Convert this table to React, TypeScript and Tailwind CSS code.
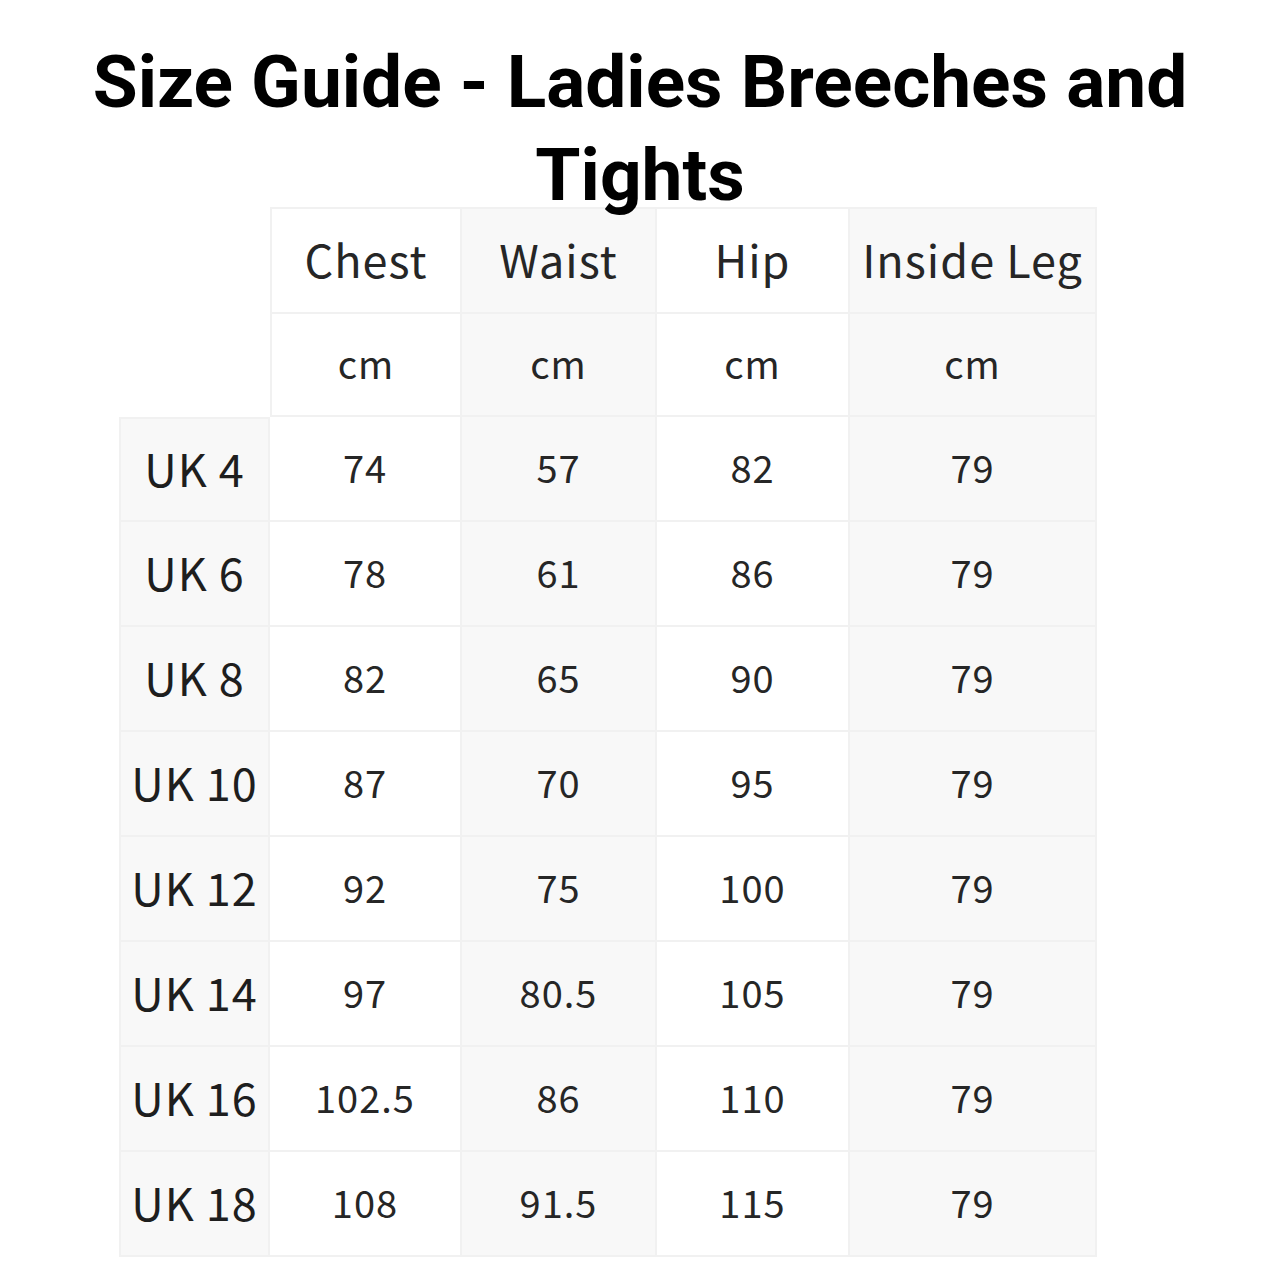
const headers = ["Chest", "Waist", "Hip", "Inside Leg"]

const rows = [
  ["UK 4", "74", "57", "82", "79"],
  ["UK 6", "78", "61", "86", "79"],
  ["UK 8", "82", "65", "90", "79"],
  ["UK 10", "87", "70", "95", "79"],
  ["UK 12", "92", "75", "100", "79"],
  ["UK 14", "97", "80.5", "105", "79"],
  ["UK 16", "102.5", "86", "110", "79"],
  ["UK 18", "108", "91.5", "115", "79"],
]

// alternate white / light grey by column
const colBg = ["bg-white", "bg-[#f8f8f8]", "bg-white", "bg-[#f8f8f8]"]

const cell = "flex items-center justify-center border-r-2 border-b-2 border-[#f1f1f1]"

export default function App() {
  return (
    <div className="flex min-h-screen w-[1280px] flex-col items-center bg-white font-['Noto_Sans_CJK_SC','Noto_Sans',sans-serif] text-[#262626]">
      <h1 className="relative z-10 mt-[36px] w-[1200px] text-center font-['Roboto',sans-serif] text-[73px] font-bold leading-[93px] text-black">
        Size Guide - Ladies Breeches and Tights
      </h1>
      <div className="mt-[-15px] ml-[-64px] grid grid-cols-[151px_192px_195px_193px_247px] grid-rows-[107px_103px_repeat(8,105px)]">
        <div className="row-span-2" />
        {headers.map((h, i) => (
          <div
            key={h}
            className={`${cell} ${colBg[i]} border-t-2 ${i === 0 ? "border-l-2" : ""} pb-[4px] text-[45px] tracking-[1px]`}
          >
            {h}
          </div>
        ))}
        {headers.map((h, i) => (
          <div key={h + "cm"} className={`${cell} ${colBg[i]} ${i === 0 ? "border-l-2" : ""} pb-[4px] text-[38px] tracking-[1px]`}>
            cm
          </div>
        ))}
        {rows.map((r, ri) => (
          <div key={r[0]} className="contents">
            <div className={`${cell} bg-[#f8f8f8] border-l-2 ${ri === 0 ? "border-t-2" : ""} pb-[4px] text-[45px] tracking-[1px] text-[#1e1e1e]`}>
              {r[0]}
            </div>
            {r.slice(1).map((v, i) => (
              <div key={i} className={`${cell} ${colBg[i]} pb-[4px] text-[38px] tracking-[1px]`}>
                {v}
              </div>
            ))}
          </div>
        ))}
      </div>
    </div>
  )
}
